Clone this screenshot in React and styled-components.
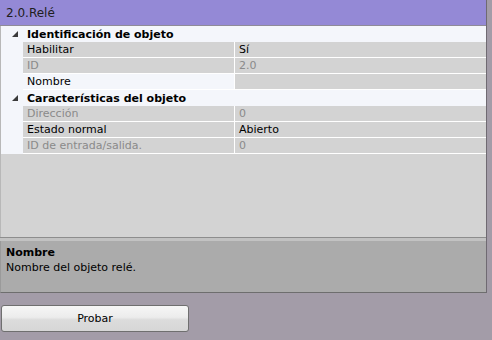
import React from 'react';
import styled, { createGlobalStyle } from 'styled-components';

const GlobalStyle = createGlobalStyle`
  html, body {
    margin: 0;
    padding: 0;
    background: #a39ca8;
  }
  body {
    font-family: Tahoma, "DejaVu Sans", sans-serif;
    font-size: 11px;
  }
`;

const Page = styled.div`
  width: 492px;
  height: 340px;
  overflow: hidden;
  background: #a39ca8;
`;

const Panel = styled.div`
  width: 486px;
  border-right: 1px solid #6f6a72;
  display: flex;
  flex-direction: column;
`;

const Header = styled.div`
  height: 26px;
  background: #9489d6;
  border-bottom: 1px solid #8f8b98;
  box-sizing: border-box;
  display: flex;
  align-items: center;
  padding-left: 6px;
  font-size: 12px;
  color: #202020;
`;

const Grid = styled.div`
  height: 211px;
  background: #d3d3d3;
  border-left: 1px solid #b8b8b8;
`;

const GroupRow = styled.div`
  display: flex;
  align-items: center;
  height: 16px;
  background: #f4f6fb;
  font-weight: bold;
  color: #000;
`;

const Toggle = styled.span`
  width: 24px;
  display: flex;
  justify-content: center;
  padding-left: 2px;
  svg { display: block; }
`;

const Row = styled.div`
  display: grid;
  grid-template-columns: 22px 211px 1fr;
  height: 16px;
  background: #f4f6fb;
`;

const Cell = styled.div`
  background: ${p => (p.$light ? '#f4f6fb' : '#d3d3d3')};
  border-bottom: 1px solid #ffffff;
  border-left: ${p => (p.$value ? '1px solid #ffffff' : 'none')};
  box-sizing: border-box;
  padding-left: 4px;
  line-height: 15px;
  color: ${p => (p.$disabled ? '#8a8a8a' : '#000')};
  white-space: nowrap;
  overflow: hidden;
`;

const Splitter = styled.div`
  height: 3px;
  border-top: 1px solid #8d8d8d;
  background: #c2c2c2;
`;

const Description = styled.div`
  height: 47px;
  background: #ababab;
  border-bottom: 1px solid #6e6e6e;
  border-left: 1px solid #9a9a9a;
  padding: 4px 5px 0;
  line-height: 15px;
  color: #000;
`;

const DescTitle = styled.div`
  font-weight: bold;
`;

const Actions = styled.div`
  padding: 12px 0 0 1px;
`;

const Button = styled.button`
  width: 188px;
  height: 27px;
  border: 1px solid #6f6f6f;
  border-radius: 3px;
  background: linear-gradient(#f6f6f6 0%, #ececec 45%, #dcdcdc 55%, #d6d6d6 100%);
  font-family: Tahoma, "DejaVu Sans", sans-serif;
  font-size: 11px;
  color: #000;
  padding: 0;
`;

const Triangle = () => (
  <svg width="6" height="6" viewBox="0 0 6 6">
    <polygon points="6,0 6,6 0,6" fill="#3a3a3a" />
  </svg>
);

const groups = [
  {
    title: 'Identificación de objeto',
    rows: [
      { label: 'Habilitar', value: 'Sí' },
      { label: 'ID', value: '2.0', disabled: true },
      { label: 'Nombre', value: '', selected: true },
    ],
  },
  {
    title: 'Características del objeto',
    rows: [
      { label: 'Dirección', value: '0', disabled: true },
      { label: 'Estado normal', value: 'Abierto' },
      { label: 'ID de entrada/salida.', value: '0', disabled: true },
    ],
  },
];

export default function App() {
  return (
    <Page>
      <GlobalStyle />
      <Panel>
        <Header>2.0.Relé</Header>
        <Grid>
          {groups.map(g => (
            <div key={g.title}>
              <GroupRow>
                <Toggle><Triangle /></Toggle>
                {g.title}
              </GroupRow>
              {g.rows.map(r => (
                <Row key={r.label}>
                  <span />
                  <Cell $light={r.selected} $disabled={r.disabled}>{r.label}</Cell>
                  <Cell $value $disabled={r.disabled}>{r.value}</Cell>
                </Row>
              ))}
            </div>
          ))}
        </Grid>
        <Splitter />
        <Description>
          <DescTitle>Nombre</DescTitle>
          Nombre del objeto relé.
        </Description>
      </Panel>
      <Actions>
        <Button>Probar</Button>
      </Actions>
    </Page>
  );
}
